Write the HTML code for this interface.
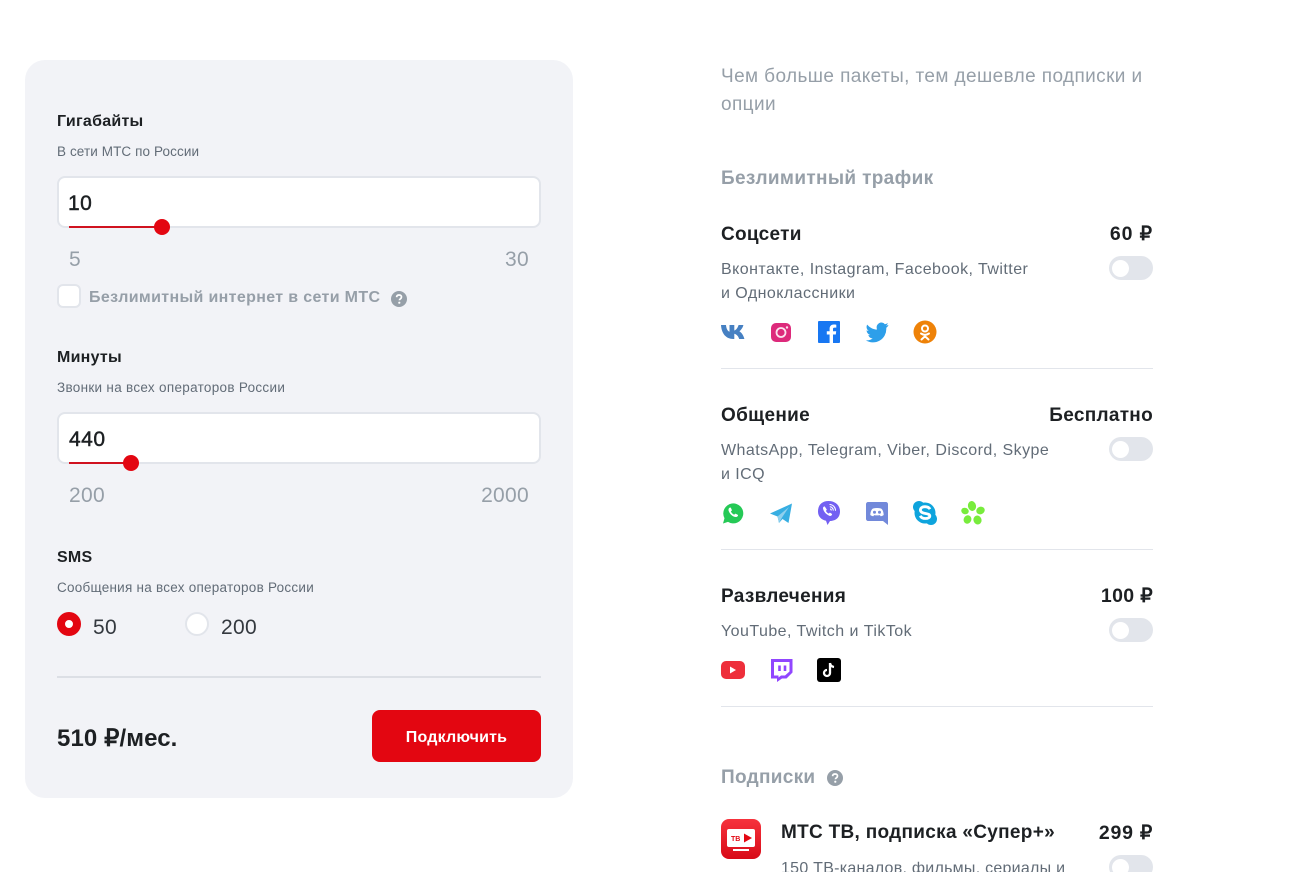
<!DOCTYPE html>
<html lang="ru"><head><meta charset="utf-8"><title>Тариф</title>
<style>
html,body{margin:0;padding:0;width:1313px;height:872px;overflow:hidden;background:#fff}
body{position:relative;font-family:"Liberation Sans",sans-serif;color:#1d2023}
.t{position:absolute;white-space:nowrap;line-height:24px}
.h{font-weight:700;font-size:16px;letter-spacing:.25px}
.s{font-size:13.5px;color:#626c77;line-height:18px}
.g{color:#969fa8}
.n{font-size:21px;color:#969fa8;letter-spacing:.3px}
.v{font-size:21px;font-weight:400;color:#1d2023;letter-spacing:.5px;-webkit-text-stroke:.45px #1d2023}
.b{font-weight:700;font-size:19px;letter-spacing:.3px}
.p{letter-spacing:.9px;font-size:19.500px}
.r{right:160px;text-align:right}
.d{font-size:16px;color:#626c77;letter-spacing:.45px}
.box{position:absolute;left:57px;width:480px;height:48px;background:#fff;border:2px solid #e2e5eb;border-radius:8px}
.track{position:absolute;height:2px;background:#d0121f;left:69px}
.knob{position:absolute;width:16px;height:16px;border-radius:50%;background:#e30611}
.sw{position:absolute;left:1109px;width:44px;height:24px;border-radius:12px;background:#e2e5eb}
.sw i{position:absolute;left:3px;top:3.500px;width:17px;height:17px;border-radius:50%;background:#fff}
.hr{position:absolute;left:721px;width:432px;height:1px;background:#e2e5eb}
svg{position:absolute;display:block}
</style></head><body>

<div style="position:absolute;left:25px;top:60px;width:548px;height:738px;background:#f2f3f7;border-radius:20px"></div>

<div class="t h" style="left:57px;top:110px">Гигабайты</div>
<div class="t s" style="left:57px;top:143px;letter-spacing:.1px">В сети МТС по России</div>
<div class="box" style="top:176px"></div>
<div class="t v" style="left:68px;top:192px">10</div>
<div class="track" style="top:226px;width:93px"></div>
<div class="knob" style="left:154px;top:219px"></div>
<div class="t n" style="left:69px;top:248px">5</div>
<div class="t n" style="right:784px;top:248px">30</div>
<div style="position:absolute;left:57px;top:284px;width:20px;height:20px;background:#fff;border:2px solid #e2e5eb;border-radius:6px"></div>
<div class="t g" style="left:89px;top:286px;font-size:16px;font-weight:700;letter-spacing:.35px">Безлимитный интернет в сети МТС</div>
<svg style="left:391px;top:291px" width="16" height="16" viewBox="0 0 16 16"><circle cx="8" cy="8" r="8" fill="#969fa8"/><path d="M5.600 6.200C5.700 4.800 6.700 4 8.100 4c1.400 0 2.400.8 2.400 2 0 1-.6 1.500-1.300 2-.5.4-.8.700-.8 1.300" fill="none" stroke="#fff" stroke-width="1.700"/><circle cx="8.300" cy="11.700" r="1.100" fill="#fff"/></svg>

<div class="t h" style="left:57px;top:346px">Минуты</div>
<div class="t s" style="left:57px;top:379px;letter-spacing:.3px">Звонки на всех операторов России</div>
<div class="box" style="top:412px"></div>
<div class="t v" style="left:69px;top:428px">440</div>
<div class="track" style="top:462px;width:62px"></div>
<div class="knob" style="left:123px;top:455px"></div>
<div class="t n" style="left:69px;top:484px">200</div>
<div class="t n" style="right:784px;top:484px">2000</div>

<div class="t h" style="left:57px;top:546px">SMS</div>
<div class="t s" style="left:57px;top:579px;letter-spacing:.25px">Сообщения на всех операторов России</div>
<div style="position:absolute;left:57px;top:612px;width:8px;height:8px;border:8px solid #e30611;background:#fff;border-radius:50%"></div>
<div class="t" style="left:93px;top:616px;font-size:21px;color:#34393f;letter-spacing:.3px">50</div>
<div style="position:absolute;left:185px;top:612px;width:20px;height:20px;border:2px solid #e2e5eb;background:#fff;border-radius:50%"></div>
<div class="t" style="left:221px;top:616px;font-size:21px;color:#34393f;letter-spacing:.3px">200</div>
<div style="position:absolute;left:57px;top:676px;width:484px;height:2px;background:#dcdfe5"></div>
<div class="t" style="left:57px;top:727px;font-size:24px;font-weight:700;letter-spacing:.1px">510 ₽/мес.</div>
<div style="position:absolute;left:372px;top:710px;width:169px;height:52px;background:#e30611;border-radius:8px"></div>
<div class="t" style="left:372px;width:169px;text-align:center;top:726px;color:#fff;font-size:16px;font-weight:700;letter-spacing:.2px">Подключить</div>

<div class="t g" style="left:721px;top:65px;font-size:19px;letter-spacing:.4px">Чем больше пакеты, тем дешевле подписки и</div>
<div class="t g" style="left:721px;top:93px;font-size:19px;letter-spacing:.4px">опции</div>
<div class="t g" style="left:721px;top:167px;font-size:19px;font-weight:700;letter-spacing:.35px">Безлимитный трафик</div>

<div class="t b" style="left:721px;top:223px">Соцсети</div>
<div class="t b r p" style="top:222px">60 ₽</div>
<div class="t d" style="left:721px;top:258px">Вконтакте, Instagram, Facebook, Twitter</div>
<div class="t d" style="left:721px;top:282px">и Одноклассники</div>
<div class="sw" style="top:256px"><i></i></div>

<svg style="left:721px;top:320px" width="24" height="24" viewBox="0 0 24 24"><path d="M0 5h5c.3 3.500 1.500 6 3.500 6.800V5h4.800v5.500c2-.5 3.500-3 4.300-5.500h4.800c-.7 3-2.500 5-4 6.300 1.800 1.200 3.800 3.300 5 7.700h-5.200c-.9-2.800-2.800-4.800-4.900-5.200V19h-1C5 19 .5 13.500 0 5z" fill="#4680c2"/></svg>
<svg style="left:769px;top:320px" width="24" height="24" viewBox="0 0 24 24"><rect x="2" y="3" width="20" height="19" rx="5" fill="#dd2a7b"/><circle cx="12" cy="12.500" r="4.500" fill="none" stroke="#fbe3ee" stroke-width="1.800"/><circle cx="18" cy="7.500" r="1.200" fill="#fbe3ee"/></svg>
<svg style="left:817px;top:320px" width="24" height="24" viewBox="0 0 24 24"><rect x="1" y="1" width="22" height="22" rx="1" fill="#1877f2"/><path d="M16 23v-8.500h2.800l.4-3.300H16V9.200c0-1 .3-1.600 1.600-1.600h1.700V4.700c-.8-.1-1.600-.2-2.500-.2-2.500 0-4.200 1.500-4.200 4.300v2.400H9.800v3.300h2.800V23z" fill="#fff"/></svg>
<svg style="left:865px;top:320px" width="24" height="24" viewBox="0 0 24 24"><path d="M23.500 4.900c-.8.400-1.800.6-2.700.8 1-.6 1.700-1.500 2.100-2.600-.9.500-1.900.9-3 1.100A4.700 4.700 0 0 0 11.800 8.500c0 .4 0 .7.100 1.100C8 9.400 4.600 7.500 2.200 4.600 .9 6.800 1.600 9.500 3.700 10.900c-.8 0-1.500-.2-2.100-.6 0 2.300 1.600 4.200 3.800 4.700-.7.200-1.400.2-2.100.1.600 1.900 2.300 3.200 4.400 3.300A9.500 9.500 0 0 1 .7 20.300 13.400 13.400 0 0 0 21.300 8.400v-.6c.9-.7 1.700-1.500 2.200-2.900z" fill="#2d9fea"/></svg>
<svg style="left:913px;top:320px" width="24" height="24" viewBox="0 0 24 24"><circle cx="12" cy="12" r="11.500" fill="#ee8208"/><circle cx="12" cy="8.500" r="3" fill="none" stroke="#fff" stroke-width="2"/><path d="M8 13.500c2.500 1.700 5.500 1.700 8 0M12 15v1.500M8.500 19.500l3.500-3.200 3.500 3.200" fill="none" stroke="#fff" stroke-width="2" stroke-linecap="round"/></svg>
<div class="hr" style="top:368px"></div>

<div class="t b" style="left:721px;top:404px">Общение</div>
<div class="t b r" style="top:404px">Бесплатно</div>
<div class="t d" style="left:721px;top:439px">WhatsApp, Telegram, Viber, Discord, Skype</div>
<div class="t d" style="left:721px;top:463px">и ICQ</div>
<div class="sw" style="top:437px"><i></i></div>

<svg style="left:721px;top:501px" width="24" height="24" viewBox="0 0 24 24"><path d="M2 22.500l1.500-5.300A10 10 0 1 1 7 20.900z" fill="#25c956"/><path d="M8.500 6.800c-1 .7-1.300 2-.7 3.500 1 2.500 3 4.500 5.500 5.500 1.500.5 2.800.2 3.500-.8.400-.6.300-1-.1-1.200l-2-1c-.4-.2-.6-.1-.9.200l-.6.700c-1.500-.6-2.700-1.800-3.300-3.300l.7-.6c.3-.3.400-.6.200-.9l-.9-2c-.3-.5-.8-.6-1.400-.1z" fill="#fff"/></svg>
<svg style="left:769px;top:501px" width="24" height="24" viewBox="0 0 24 24"><path d="M1 12.500 23 2.500 19.500 22l-6-4-3.500 4-1.500-6.500z" fill="#37aee2"/><path d="M8.500 15.500 20 6l-7 10.500-3 5.500z" fill="#8fd0ee"/></svg>
<svg style="left:817px;top:501px" width="24" height="24" viewBox="0 0 24 24"><path d="M11.500 0C18 0 23 4 23 10.500S18 20 13 20l-2.500 4-1.500-4.200C4 18.500 1 15.500 1 10.500 1 4 5 0 11.500 0z" fill="#7360f2"/><path d="M7 5.500c-1 .6-1.200 1.500-.8 2.800 1 3 3 5 6 6.500 1.300.4 2.200 0 2.700-.9.300-.5.200-.9-.2-1.100l-1.500-1c-.4-.2-.7-.1-.9.200l-.5.600c-1.300-.5-2.300-1.500-2.900-2.900l.6-.5c.3-.3.300-.5.100-.9l-1-1.500C7.800 5.400 7.500 5.200 7 5.500z" fill="#fff"/><path d="M12.500 3.500c3.300 0 6 2.700 6 6.200M12.800 5.700c2 0 3.500 1.700 3.500 3.900M13 8c.8 0 1.300.6 1.300 1.500" fill="none" stroke="#fff" stroke-width="1.100"/></svg>
<svg style="left:865px;top:501px" width="24" height="24" viewBox="0 0 24 24"><path d="M3 1h18c1 0 2 1 2 2v21l-5-4H3c-1 0-2-1-2-2V3c0-1 1-2 2-2z" fill="#7289da"/><path d="M8 7.500c2.600-.7 5.400-.7 8 0 1.500.7 2.500 3 2.700 6.500-1 .8-2 1.200-3 1.300l-.8-1.200c-1.900.4-3.900.4-5.800 0l-.8 1.200c-1 -.1-2-.5-3-1.300.2-3.500 1.200-5.800 2.700-6.500z" fill="#fff"/><circle cx="9.500" cy="11.200" r="1.500" fill="#7289da"/><circle cx="14.500" cy="11.200" r="1.500" fill="#7289da"/></svg>
<svg style="left:913px;top:501px" width="24" height="24" viewBox="0 0 24 24"><circle cx="6" cy="6" r="6" fill="#0ea4dd"/><circle cx="18" cy="18" r="6" fill="#0ea4dd"/><circle cx="12" cy="12" r="10.500" fill="#0ea4dd"/><path d="M17 8.200C16 6.500 14.300 5.700 12 5.700c-2.900 0-4.600 1.400-4.600 3.300 0 4.700 9.400 2.400 9.400 6 0 1.400-1.600 2.500-4.500 2.500-2.500 0-4.200-1-5.100-2.700" fill="none" stroke="#fff" stroke-width="2.800"/></svg>
<svg style="left:961px;top:501px" width="24" height="24" viewBox="0 0 24 24"><g fill="#78ec3c"><ellipse cx="11" cy="5" rx="4" ry="5" transform="rotate(-12 11 5)"/><ellipse cx="19.500" cy="9.500" rx="4.300" ry="3.700" transform="rotate(-25 19.500 9.500)"/><ellipse cx="4" cy="10" rx="3.800" ry="3.200" transform="rotate(20 4 10)"/><ellipse cx="6.500" cy="18.500" rx="3.800" ry="4.300" transform="rotate(25 6.500 18.500)"/><ellipse cx="16.500" cy="19" rx="4" ry="4.500" transform="rotate(-20 16.500 19)"/></g></svg>
<div class="hr" style="top:549px"></div>

<div class="t b" style="left:721px;top:585px">Развлечения</div>
<div class="t b r p" style="top:584px;letter-spacing:.35px">100 ₽</div>
<div class="t d" style="left:721px;top:620px">YouTube, Twitch и TikTok</div>
<div class="sw" style="top:618px"><i></i></div>

<svg style="left:721px;top:658px" width="24" height="24" viewBox="0 0 24 24"><rect y="3" width="24" height="18" rx="5" fill="#ee2f3b"/><path d="M9 8.500v7l6-3.500z" fill="#fff"/></svg>
<svg style="left:769px;top:658px" width="24" height="24" viewBox="0 0 24 24"><path d="M2 1h21.500v13.500L17.500 20.500H13l-5 3.500v-3.500H2z" fill="#9146ff"/><path d="M5 4h15.500v9.500L16 17.500h-4l-2.500 2v-2H5z" fill="#fff"/><path d="M10.500 7.500v5.500M16 7.500v5.500" stroke="#9146ff" stroke-width="2.600"/></svg>
<svg style="left:817px;top:658px" width="24" height="24" viewBox="0 0 24 24"><rect width="24" height="24" rx="3" fill="#000"/><path d="M13 5v10a3 3 0 1 1-3-3M13 5c.3 2.300 1.800 3.700 4 4" fill="none" stroke="#fff" stroke-width="2.300"/></svg>
<div class="hr" style="top:706px"></div>

<div class="t g" style="left:721px;top:766px;font-size:19px;font-weight:700;letter-spacing:.3px">Подписки</div>
<svg style="left:827px;top:770px" width="16" height="16" viewBox="0 0 16 16"><circle cx="8" cy="8" r="8" fill="#969fa8"/><path d="M5.600 6.200C5.700 4.800 6.700 4 8.100 4c1.400 0 2.400.8 2.400 2 0 1-.6 1.500-1.300 2-.5.4-.8.700-.8 1.300" fill="none" stroke="#fff" stroke-width="1.700"/><circle cx="8.300" cy="11.700" r="1.100" fill="#fff"/></svg>

<svg style="left:721px;top:819px" width="40" height="40" viewBox="0 0 40 40"><defs><linearGradient id="tv" x1="0" y1="0" x2="0" y2="1"><stop offset="0" stop-color="#f6333d"/><stop offset="1" stop-color="#d80a17"/></linearGradient></defs><rect width="40" height="40" rx="8" fill="url(#tv)"/><rect x="6" y="10" width="28" height="18" rx="2" fill="#fff"/><rect x="12" y="30" width="16" height="2" fill="#fff"/><path d="M23 14.500v9l8-4.500z" fill="#e30611"/><text x="10" y="22" font-family="Liberation Sans, sans-serif" font-size="7" font-weight="700" fill="#e30611">ТВ</text></svg>
<div class="t" style="left:781px;top:821px;font-size:19px;font-weight:700;letter-spacing:.3px">МТС ТВ, подписка «Супер+»</div>
<div class="t b r p" style="top:821px;letter-spacing:.75px">299 ₽</div>
<div class="t d" style="left:781px;top:857px;letter-spacing:.26px">150 ТВ-каналов, фильмы, сериалы и</div>
<div class="sw" style="top:855px"><i></i></div>

</body></html>
